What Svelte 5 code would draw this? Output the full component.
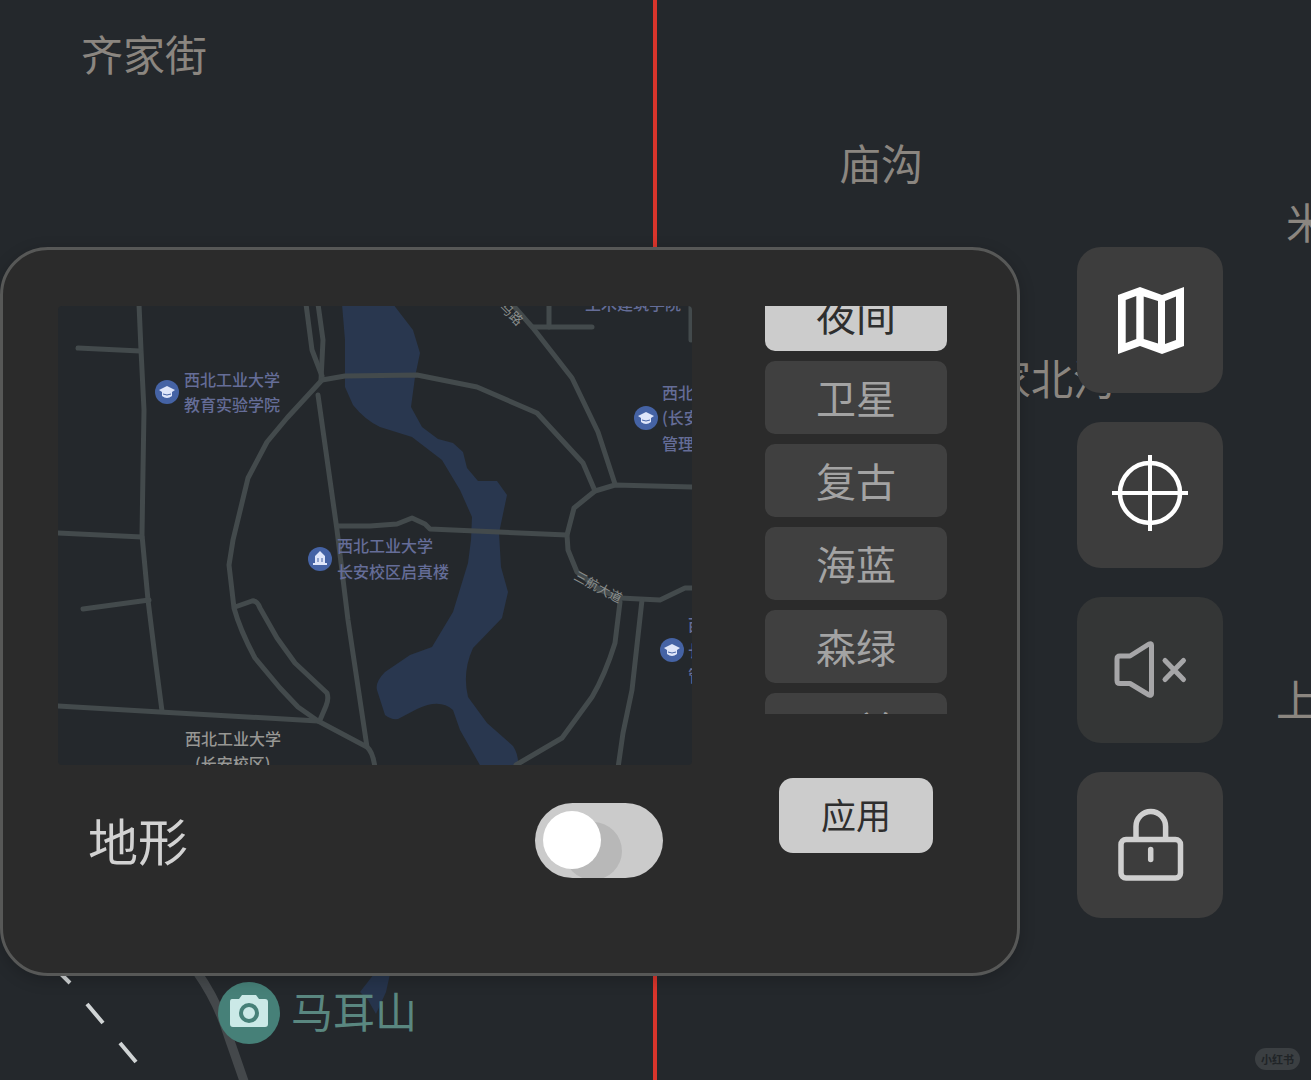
<script lang="ts">
  import { onMount } from "svelte";

  const styles = ["夜间", "卫星", "复古", "海蓝", "森绿", "玉兰"];

  const places = [
    { name: "齐家街", x: 81, y: 71 },
    { name: "庙沟", x: 839, y: 180 },
    { name: "米", x: 1286, y: 239 },
    { name: "家北沟", x: 989, y: 395 },
    { name: "上", x: 1276, y: 716 },
  ];

  const roads = [
    "M139 304L141 350L144 410L143 470L142 535L148 600L156 665L162 711",
    "M78 348L140 351",
    "M56 533L142 537",
    "M83 609L149 600",
    "M56 706L160 712L318 721L367 747Q373 752 375 768",
    "M306 304L312 350L322 376",
    "M318 304L323 340L321 380",
    "M322 380L287 418L267 442L248 478L233 540L229 565L234 608Q240 630 255 658L280 688L298 707L318 721",
    "M235 607L252 601Q257 600 260 608L277 638L295 663L327 693Q329 699 326 706L320 720",
    "M322 380L345 376L417 375L477 387L537 413L583 463L595 491",
    "M505 296L533 328L572 378L598 432L615 484",
    "M549 304V327",
    "M533 327H592",
    "M691 304V340",
    "M694 487L615 485L595 491L574 508L567 535L568 550L577 572L600 590L620 598L660 600L685 588H694",
    "M338 526H370L397 524L412 518L425 524L430 529L567 535",
    "M318 395L337 530L348 620L367 747",
    "M620 602L615 643Q605 675 592 697L562 738L516 765",
    "M642 600L632 690L623 733L618 768",
  ];

  const labels = [
    { text: "西北工业大学", x: 184, y: 386 },
    { text: "教育实验学院", x: 184, y: 411 },
    { text: "西北工业大学", x: 337, y: 552 },
    { text: "长安校区启真楼", x: 337, y: 578 },
    { text: "土木建筑学院", x: 585, y: 310 },
    { text: "西北工业大学", x: 662, y: 399 },
    { text: "(长安校区)", x: 662, y: 424 },
    { text: "管理学院", x: 662, y: 450 },
    { text: "西北", x: 688, y: 631 },
    { text: "长安", x: 688, y: 657 },
    { text: "管理", x: 688, y: 682 },
  ];

  const schools = [
    [167, 392],
    [646, 418],
    [672, 650],
  ];

  let active = $state("夜间");
  let terrain = $state(false);
  let list: HTMLElement;

  onMount(() => {
    list.scrollTop = 28;
  });
</script>

<main class="screen">
  <svg class="map" aria-hidden="true">
    <path d="M655 0V1080" stroke="#d9352c" stroke-width="4" />
    <path d="M197 972Q218 1002 228 1035L245 1084" fill="none" stroke="#44484b" stroke-width="9" />
    <path d="M374 974H390L386 992L376 1014L368 1000L360 992Z" fill="#26344c" />
    <g stroke="#d0d4d5" stroke-width="4">
      <path d="M60 973L70 983M87 1004L103 1023M120 1043L136 1062" />
    </g>
    {#each places as place}
      <text class="place" x={place.x} y={place.y}>{place.name}</text>
    {/each}
    <circle cx="249" cy="1013" r="31" fill="#468078" />
    <path
      fill="#cbe9e7"
      d="M232 999h7l3-4h14l3 4h6q3 0 3 3v22q0 3-3 3h-32q-3 0-3-3v-22q0-3 2-3z"
    />
    <circle cx="249" cy="1013" r="8" fill="#cbe9e7" stroke="#468078" stroke-width="4" />
    <text class="place scenic" x="291" y="1028">马耳山</text>
  </svg>

  <section class="panel">
    <div class="left">
      <svg class="preview" viewBox="58 306 634 459" preserveAspectRatio="xMinYMin slice" role="img" aria-label="夜间">
        <path
          fill="#29374f"
          d="M342 304L345 340V387L353 405Q365 420 380 427L412 437L442 460L460 490L472 517L471 540L468 563L453 612L432 647L410 655L385 672Q375 682 377 690L385 715Q391 720 398 719L417 709Q440 698 453 710L460 730L481 767H518Q519 755 513 746L487 723L468 697Q462 672 473 648L502 618L508 592L501 567L499 533L507 495L497 481H478L467 468L463 452L453 443L438 439L422 427L411 407L415 377L420 353L413 330L393 304Z"
        />
        <g class="roads">
          {#each roads as d}
            <path {d} />
          {/each}
        </g>
        {#each labels as label}
          <text class="label" x={label.x} y={label.y}>{label.text}</text>
        {/each}
        <text class="label area" x="185" y="745">西北工业大学</text>
        <text class="label area" x="195" y="770">(长安校区)</text>
        <text class="street" transform="translate(573 579) rotate(28)">三航大道</text>
        <text class="street" transform="translate(499 308) rotate(45)">马路</text>
        {#each schools as [x, y]}
          <g transform="translate({x} {y})">
            <circle r="12" fill="#4563a5" />
            <path fill="#dfe6fa" d="M0-6L8-2L5 0V4Q0 8-5 4V0L-8-2Z" />
            <path d="M-4 2Q0 4 4 2" fill="none" stroke="#4563a5" />
          </g>
        {/each}
        <g transform="translate(320 559)">
          <circle r="12" fill="#4563a5" />
          <path fill="#dfe6fa" d="M0-8L5-3V4H7V6H-7V4H-5V-3Z" />
          <path d="M-2-1V3M2-1V3" stroke="#4563a5" />
        </g>
      </svg>
      <div class="terrain">
        <label for="terrain">地形</label>
        <input id="terrain" type="checkbox" role="switch" bind:checked={terrain} />
      </div>
    </div>

    <div class="right">
      <div class="styles" bind:this={list}>
        {#each styles as style}
          <button class:active={active === style} onclick={() => (active = style)}>{style}</button>
        {/each}
      </div>
      <button class="apply">应用</button>
    </div>
  </section>

  <nav class="tools">
    <button aria-label="地图">
      <svg viewBox="0 0 80 80">
        <path
          fill="#fff"
          fill-rule="evenodd"
          d="M8 15L30 7L52 15L74 7V66L52 74L30 66L8 74ZM15.7 20V63L26.3 59V16ZM33.7 16.5V59L48 63.5V21ZM55 21V64L66 60V16.5Z"
        />
      </svg>
    </button>
    <button aria-label="定位">
      <svg viewBox="0 0 80 80" fill="none" stroke="#fff">
        <circle cx="40" cy="38" r="30" stroke-width="4.5" />
        <path d="M2 38H78M40 0V76" stroke-width="4" />
      </svg>
    </button>
    <button class="muted" aria-label="静音">
      <svg
        viewBox="0 0 80 80"
        fill="none"
        stroke="#a6a6a8"
        stroke-width="5"
        stroke-linecap="round"
        stroke-linejoin="round"
      >
        <path d="M10 26H20L39 14Q41.500 13 41.500 15V64Q41.500 66 39 65L20 53.500H10Q7 53.500 7 50.500V29Q7 26 10 26Z" />
        <path d="M55 30.500L73.500 49.500M73.500 30.500L55 49.500" />
      </svg>
    </button>
    <button aria-label="锁定">
      <svg viewBox="0 0 80 80" fill="none" stroke="#d0d0d0" stroke-width="5.5" stroke-linecap="round">
        <rect x="11" y="34.500" width="59.500" height="38.500" rx="5" />
        <path d="M26 33V21.500A14.800 15 0 0 1 55.600 21.500V33" />
        <path d="M40.700 44.500V54.500" />
      </svg>
    </button>
  </nav>

  <span class="badge">小红书</span>
</main>

<style>
  :global(body) {
    margin: 0;
    background: #24282c;
  }

  .screen {
    position: relative;
    box-sizing: border-box;
    display: flex;
    align-items: flex-start;
    gap: 57px;
    min-height: 100vh;
    padding: 247px 88px 104px 0;
    overflow: hidden;
    background: #24282c;
    font-family: "Noto Sans CJK SC", sans-serif;
  }

  .map {
    position: absolute;
    inset: 0;
    width: 100%;
    height: 100%;
  }

  .place {
    font-size: 42px;
    fill: #8b8680;
  }

  .scenic {
    fill: #5a8780;
  }

  button {
    padding: 0;
    border: 0;
    font-family: inherit;
    cursor: pointer;
  }

  .panel {
    position: relative;
    flex: 1;
    display: grid;
    grid-template-columns: 1fr 182px;
    gap: 73px;
    padding: 56px 70px 95px 55px;
    border: 3px solid #575857;
    border-radius: 48px;
    background: #2b2b2b;
    box-shadow: 0 4px 16px rgba(0, 0, 0, 0.2);
  }

  .preview {
    display: block;
    width: 100%;
    height: 459px;
    border-radius: 4px;
    background: #24282c;
  }

  .roads {
    fill: none;
    stroke: #434a4c;
    stroke-width: 5px;
    stroke-linejoin: round;
    stroke-linecap: round;
  }

  .label {
    font-size: 16px;
    font-weight: 500;
    fill: #656d98;
  }

  .area {
    fill: #979794;
  }

  .street {
    font-size: 13px;
    fill: #8a8e8c;
  }

  .terrain {
    display: flex;
    align-items: center;
    justify-content: space-between;
    height: 75px;
    margin-top: 38px;
    padding: 0 29px 0 30px;
  }

  .terrain label {
    font-size: 50px;
    line-height: 72px;
    padding-bottom: 3px;
    color: #d2d2d2;
  }

  .terrain input {
    appearance: none;
    width: 128px;
    height: 75px;
    margin: 0;
    padding: 8px;
    box-sizing: border-box;
    border-radius: 38px;
    background: #cbcbcb;
    overflow: hidden;
    cursor: pointer;
  }

  .terrain input::before {
    content: "";
    display: block;
    width: 58px;
    height: 58px;
    border-radius: 50%;
    background: #fff;
    box-shadow: 21px 11px #b8b8b8;
  }

  .terrain input:checked::before {
    margin-left: auto;
  }

  .right {
    display: flex;
    flex-direction: column;
    align-items: center;
  }

  .styles {
    display: flex;
    flex-direction: column;
    gap: 10px;
    width: 100%;
    height: 408px;
    overflow-y: scroll;
    scrollbar-width: none;
  }

  .styles button {
    flex: none;
    height: 73px;
    border-radius: 10px;
    background: #404040;
    color: #a3a3a3;
    font-size: 40px;
    line-height: 73px;
  }

  .styles button.active {
    background: #cccccc;
    color: #2e2e2e;
  }

  .apply {
    width: 154px;
    height: 75px;
    margin-top: 64px;
    padding-bottom: 3px;
    border-radius: 14px;
    background: #cccccc;
    color: #2e2e2e;
    font-size: 35px;
    line-height: 72px;
  }

  .tools {
    position: relative;
    display: flex;
    flex-direction: column;
    gap: 29px;
  }

  .tools button {
    display: flex;
    align-items: center;
    justify-content: center;
    width: 146px;
    height: 146px;
    border-radius: 24px;
    background: #3d3d3d;
  }

  .tools .muted {
    background: #343636;
  }

  .tools svg {
    width: 80px;
    height: 80px;
  }

  .badge {
    position: absolute;
    right: 11px;
    bottom: 10px;
    padding: 0 6px;
    border-radius: 11px;
    background: #3b3f42;
    color: #202427;
    font-size: 11px;
    font-weight: 700;
    line-height: 22px;
  }
</style>
